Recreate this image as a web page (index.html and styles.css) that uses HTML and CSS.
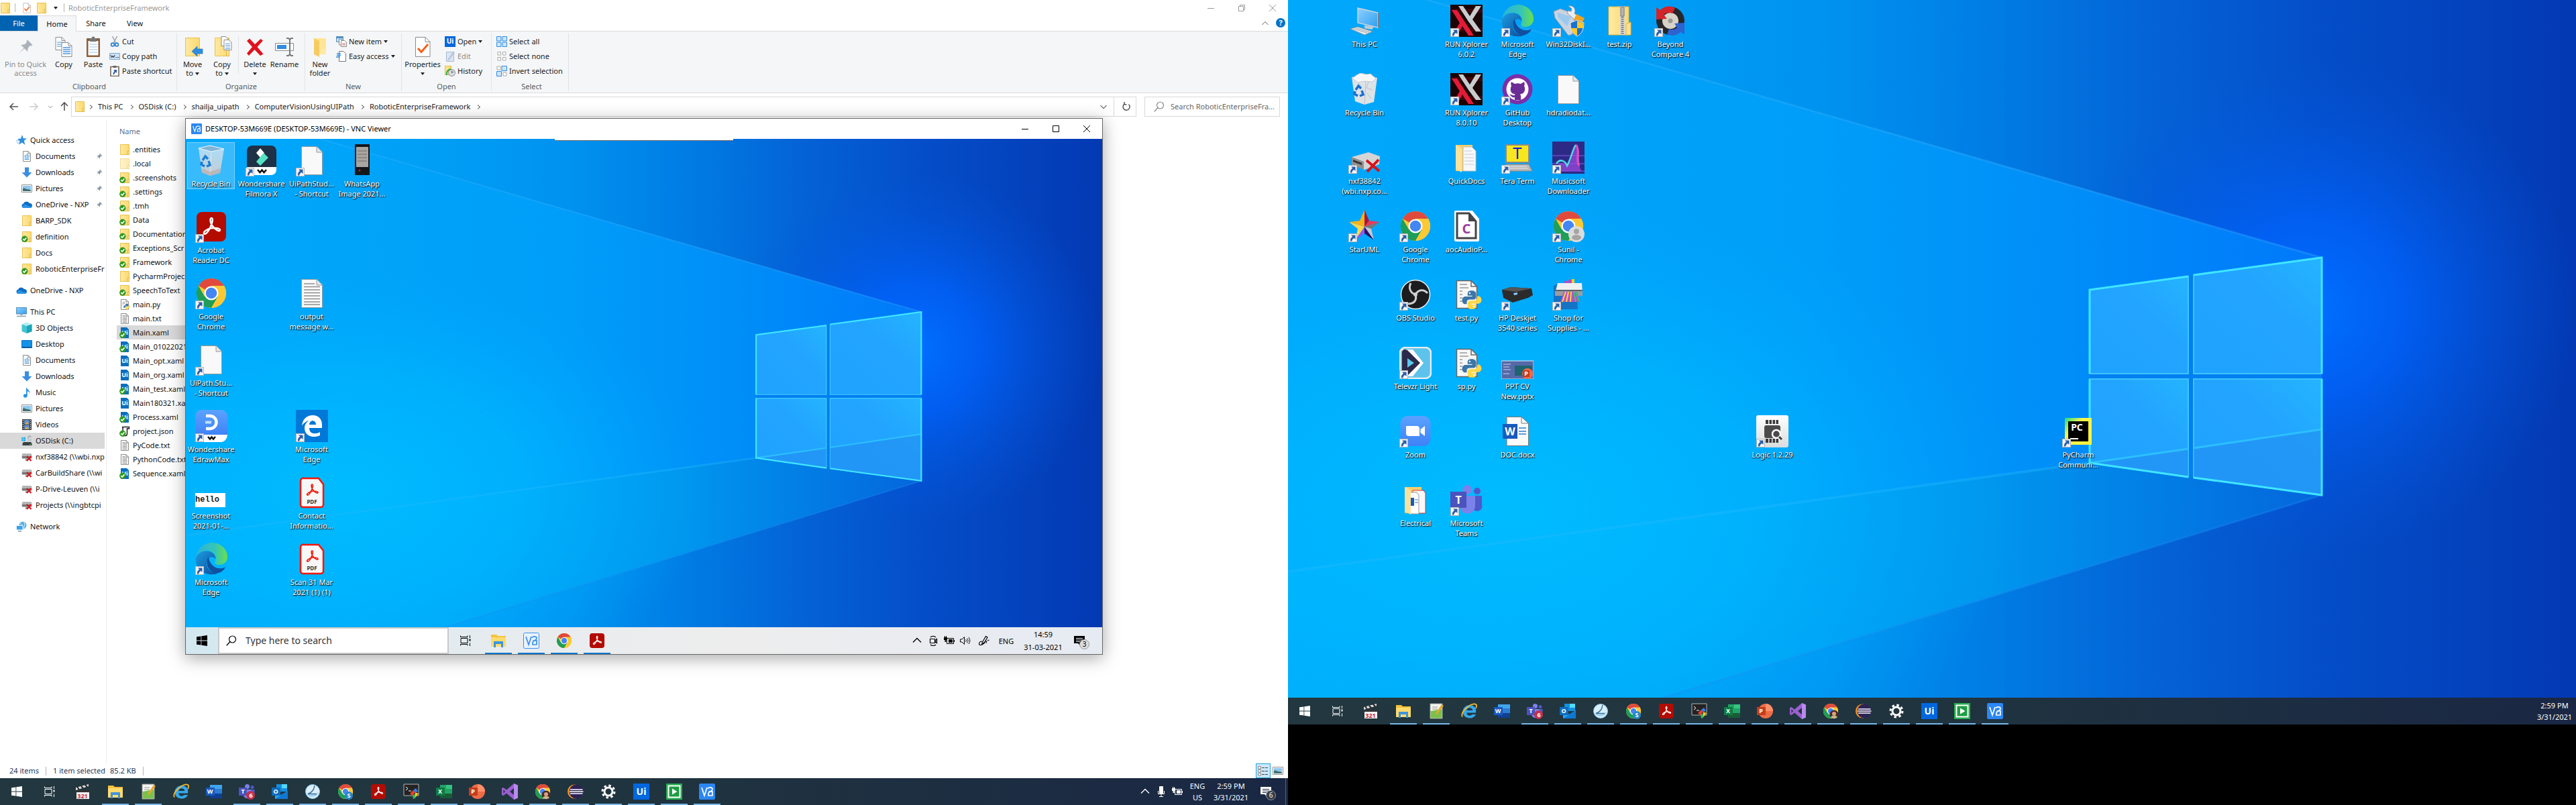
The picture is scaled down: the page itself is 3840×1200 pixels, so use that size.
FILE: index.html
```html
<!DOCTYPE html>
<html lang="en">
<head>
<meta charset="utf-8">
<title>RoboticEnterpriseFramework</title>
<link rel="stylesheet" href="styles.css">
</head>
<body>
<svg class="sprite" width="0" height="0" aria-hidden="true">
<defs>
<linearGradient id="wBase"><stop offset="0" stop-color="#00a6f9"/><stop offset=".25" stop-color="#00a0f6"/><stop offset=".42" stop-color="#0092ef"/><stop offset=".55" stop-color="#007ce4"/><stop offset=".67" stop-color="#0463d6"/><stop offset=".8" stop-color="#044ec9"/><stop offset="1" stop-color="#0339b3"/></linearGradient>
<linearGradient id="wBeam" gradientUnits="userSpaceOnUse" x1="0" y1="0" x2="1541" y2="0"><stop offset="0" stop-color="#00a8fb"/><stop offset=".3" stop-color="#00a3f8"/><stop offset=".5" stop-color="#009ef9"/><stop offset=".75" stop-color="#008ef8"/><stop offset="1" stop-color="#0078fa"/></linearGradient>
<linearGradient id="wLow" gradientUnits="userSpaceOnUse" x1="0" y1="0" x2="1541" y2="0"><stop offset="0" stop-color="#00b0fc"/><stop offset=".4" stop-color="#00a6f6"/><stop offset=".68" stop-color="#0096ee"/><stop offset="1" stop-color="#0466dc"/></linearGradient>
<radialGradient id="wGlow"><stop offset="0" stop-color="#0070ff"/><stop offset=".35" stop-color="#0064ff" stop-opacity=".75"/><stop offset="1" stop-color="#0456dc" stop-opacity="0"/></radialGradient>
<radialGradient id="wSoft"><stop offset="0" stop-color="#00bcff"/><stop offset=".5" stop-color="#00b6ff" stop-opacity=".7"/><stop offset="1" stop-color="#00aaff" stop-opacity="0"/></radialGradient>
<linearGradient id="wPane" x1="0" y1="1" x2="1" y2="0"><stop offset="0" stop-color="#1fa2ff"/><stop offset=".6" stop-color="#22a4ff"/><stop offset="1" stop-color="#25b4ff"/></linearGradient>
<linearGradient id="gEdge" x1="0" y1="0" x2="1" y2="1"><stop offset="0" stop-color="#1b9de2"/><stop offset="1" stop-color="#0c4a98"/></linearGradient>
<linearGradient id="gEdge2"><stop offset="0" stop-color="#2bb3d9"/><stop offset=".6" stop-color="#35c5b8"/><stop offset="1" stop-color="#6be04a"/></linearGradient>
<linearGradient id="gFold"><stop offset="0" stop-color="#ffe9a2"/><stop offset="1" stop-color="#fbd96f"/></linearGradient>
<linearGradient id="gScreen" x1="0" y1="0" x2="1" y2="1"><stop offset="0" stop-color="#8ed0ff"/><stop offset="1" stop-color="#2f9ff0"/></linearGradient>
<linearGradient id="gBin" x1="0" y1="0" x2="0" y2="1"><stop offset="0" stop-color="#d7e9f5" stop-opacity=".7"/><stop offset="1" stop-color="#c4cbd2"/></linearGradient>
<linearGradient id="gPc" x1="0" y1="0" x2="1" y2="1"><stop offset="0" stop-color="#1bd98a"/><stop offset=".35" stop-color="#fcf84a"/><stop offset="1" stop-color="#fcf03a"/></linearGradient>
<linearGradient id="gGrey" x1="0" y1="0" x2="0" y2="1"><stop offset="0" stop-color="#fff"/><stop offset="1" stop-color="#dcdcdc"/></linearGradient>
<linearGradient id="gBlue" x1="0" y1="0" x2="0" y2="1"><stop offset="0" stop-color="#5aa2ff"/><stop offset="1" stop-color="#3f82f7"/></linearGradient>
</defs>

<symbol id="wall" viewBox="0 0 1920 1080" preserveAspectRatio="none">
<rect width="1920" height="1080" fill="url(#wBase)"/>
<ellipse cx="1530" cy="460" rx="390" ry="370" fill="url(#wGlow)"/>
<path d="M0 0H210L1541 384V640L1195 690 0 852Z" fill="url(#wBeam)"/>
<path d="M0 852L1195 690 1541 738 430 1080H0Z" fill="url(#wLow)"/>
<ellipse cx="330" cy="760" rx="760" ry="470" fill="url(#wSoft)"/>
<path d="M180 -8L1541 384" stroke="#3fb4ff" stroke-opacity=".3" stroke-width="3"/>
<path d="M0 852L1195 690" stroke="#20b8ff" stroke-opacity=".4" stroke-width="4"/>
<path d="M430 1080L1541 738" stroke="#1c8cf0" stroke-opacity=".35" stroke-width="3"/>
<path d="M1195 432L1541 384V738L1195 690Z" fill="#027ff0"/>
<g fill="url(#wPane)" stroke="#3cc4ff" stroke-width="2"><path d="M1195 432L1342 412V557H1195Z"/><path d="M1350 410L1541 384V557H1350Z"/><path d="M1195 565H1342V711L1195 690Z"/><path d="M1350 565H1541V738L1350 712Z"/></g>
<path d="M1195 690L1342 669V711ZM1350 668L1541 640V738L1350 712Z" fill="#2489ee" fill-opacity=".5"/>
<path d="M1195 690L1342 669M1350 668L1541 640" stroke="#2cc0ff" stroke-width="3"/>
<path d="M1195 557V432L1342 412M1350 410L1541 384V557M1195 565V690L1342 711M1541 565V738L1350 712" fill="none" stroke="#3fe6ff" stroke-width="3"/>
</symbol>

<symbol id="sc" viewBox="0 0 48 48"><rect x=".5" y="35.500" width="12" height="12" fill="#f7f7f7" stroke="#b5b5b5"/><path d="M4 37.500H10.500V44L8.400 42C6.500 43 5.500 44.500 5.300 46.500H3C2.500 43.500 3.800 41 6.200 39.700Z" fill="#2c5ea8"/></symbol>
<symbol id="ok" viewBox="0 0 16 16"><circle cx="4.800" cy="11.200" r="4.700" fill="#2e9a1e"/><path d="M2.300 11.200L4.200 13 7.400 9.400" fill="none" stroke="#fff" stroke-width="1.600"/></symbol>
<symbol id="folder" viewBox="0 0 16 16"><path d="M1.500 .5H14.500V15.500H1.500Z" fill="url(#gFold)" stroke="#e9c14e"/><path d="M12 10.500L14.500 9.500V15.500H12Z" fill="#fbe093" stroke="#e2b843"/></symbol>
<symbol id="page" viewBox="0 0 16 16"><path d="M2.500 .5H10L13.500 4V15.500H2.500Z" fill="#fff" stroke="#8a8a8a"/><path d="M10 .5V4H13.500" fill="none" stroke="#8a8a8a"/></symbol>
<symbol id="txt" viewBox="0 0 16 16"><use href="#page"/><path d="M4.500 5.500H11.500M4.500 7.500H11.500M4.500 9.500H11.500M4.500 11.500H11.500M4.500 13.500H11.500M4.500 3.500H8.500" stroke="#8d8d8d"/></symbol>
<symbol id="json" viewBox="0 0 16 16"><path d="M4 1.500H14.500V4H12M4 1.500C6 2 5 4 5 6V12C5 14 4 14.500 3 14.500H9.500C11 14.500 11.500 13 11.500 11V3" fill="#fff" stroke="#222" stroke-width="1.500"/></symbol>
<symbol id="uifile" viewBox="0 0 16 16"><path d="M2 0H11L14 3V16H2Z" fill="#0c6ebd"/></symbol>
<symbol id="snake" viewBox="0 0 24 24"><path d="M12 1C8 1 7 2.500 7 4.500V7H12.500V8H4.500C2 8 .5 10 .5 12.500S2 17 4 17H6V14.500C6 12.500 7.500 11.500 9.500 11.500H14C16 11.500 17 10 17 8.500V4.500C17 2.500 15 1 12 1Z" fill="#3a76a8"/><path d="M12 23C16 23 17 21.500 17 19.500V17.500H11.500V16.500H19.500C22 16.500 23.500 14.500 23.500 12S22 7.500 20 7.500H18.300V9.500C18.300 11.500 16.500 13 14.500 13H10C8 13 7 14.500 7 16V19.500C7 21.500 9 23 12 23Z" fill="#ffd94a"/><circle cx="9.500" cy="4" r="1" fill="#fff"/><circle cx="14.500" cy="20" r="1" fill="#fff"/></symbol>
<symbol id="pyfile" viewBox="0 0 16 16"><use href="#page"/><path d="M4.500 4.500H9M4.500 6.500H8M4.500 8.500H6" stroke="#999"/><use href="#snake" x="6" y="6" width="10" height="10"/></symbol>
<symbol id="doc" viewBox="0 0 16 16"><use href="#page"/><path d="M4.500 6.500H7M4.500 8.500H7M4.500 10.500H11.500M4.500 12.500H11.500M8.500 4V9M10 6.500H12M10 8.500H12" stroke="#3b8fd0" stroke-width="1.200"/></symbol>
<symbol id="star" viewBox="0 0 16 16"><path d="M9 0L10.800 5.200 16 5.500 11.800 8.800 13.500 15 9 11.500 4 14.500 5.500 9.500 2 6.300 7 5.500Z" fill="#2f8fdf"/><path d="M0 9H4M1 12H4" stroke="#6ab4ec"/></symbol>
<symbol id="down" viewBox="0 0 16 16"><path d="M5 .5H11V8H15.500L8 15.500.5 8H5Z" fill="#3a8ee0"/></symbol>
<symbol id="pic" viewBox="0 0 16 16"><path d="M.5 2.500H15.500V13.500H.5Z" fill="#fff" stroke="#909090"/><path d="M2 4H14V12H2Z" fill="#8fc7ef"/><path d="M2 8C5 6.500 7 10 10 9L14 10.500V12H2Z" fill="#3e6f6f"/></symbol>
<symbol id="cloud" viewBox="0 0 16 16"><path d="M3.500 13A3.300 3.300 0 0 1 3 6.500 5 5 0 0 1 12 6 3.500 3.500 0 0 1 12.800 13Z" fill="#0f6cc4"/><path d="M1 11C3 7 7 7 9 9.500L15.500 11C15 12.500 14 13 12.800 13H3.500C2 13 1.200 12 1 11Z" fill="#2793e6"/></symbol>
<symbol id="pc" viewBox="0 0 16 16"><path d="M.5 1.500H15.500V11H.5Z" fill="url(#gScreen)" stroke="#5a8fb5"/><path d="M6 11.500H10V13H6Z" fill="#9ab"/><path d="M1 14.500H15" stroke="#8da6b5" stroke-width="1.600"/></symbol>
<symbol id="cube" viewBox="0 0 16 16"><path d="M8 0L15.500 2.500V13L8 16 .5 13V2.500Z" fill="#42c6d4"/><path d="M.5 2.500L8 5 15.500 2.500 8 0Z" fill="#b8eef2"/><path d="M8 5L15.500 2.500V13L8 16Z" fill="#1ea4b8"/></symbol>
<symbol id="desk" viewBox="0 0 16 16"><path d="M.5 2.500H15.500V13.500H.5Z" fill="#1593ea" stroke="#0d6fbd"/><path d="M1 12H15V13H1Z" fill="#0a4f90"/></symbol>
<symbol id="note" viewBox="0 0 16 16"><path d="M7 0C8 3.500 13 4.500 12.500 10 12 7.500 10.500 6.500 8.800 6.300V13A3 2.600 0 1 1 7 10.700Z" fill="#2492e6"/></symbol>
<symbol id="film" viewBox="0 0 16 16"><path d="M1 0H15V16H1Z" fill="#333"/><path d="M4 1H12V7.500H4ZM4 8.500H12V15H4Z" fill="#5f8fd0"/><path d="M5 7.500L8 3 11 7.500M5 15L8 10.500 11 15" fill="#d9a24a"/><path d="M2.500 1V16M13.500 1V16" stroke="#fff" stroke-dasharray="1.500 1.500"/></symbol>
<symbol id="disk" viewBox="0 0 16 16"><path d="M0 3H2.500V5.500H0ZM3 2.700H6V5.500H3ZM0 6H2.500V8.500H0ZM3 6H6V8.800H3Z" fill="#24b0ef"/><path d="M3 10H14L15.500 12V15H1.500V12Z" fill="#3a3f44"/><path d="M12 13.500H14" stroke="#39e03c"/><path d="M8.500 4.500H15V9.500H8.500Z" fill="#c5ccd2"/><path d="M10 4.500V3A2 2 0 0 1 14 3" fill="none" stroke="#9aa5ad" stroke-width="1.300"/></symbol>
<symbol id="ndrive" viewBox="0 0 16 16"><path d="M1.500 3H14.500L15.500 6V10H.5V6Z" fill="#b5b5b5"/><path d="M1 7H15V10.500H1Z" fill="#777"/><path d="M6 10.500H9V14H6Z" fill="#9a9a9a"/><path d="M8 7L14.500 14M14.500 7L8 14" stroke="#d8131b" stroke-width="2.200"/></symbol>
<symbol id="net" viewBox="0 0 16 16"><circle cx="10" cy="6" r="5.500" fill="#5fb0de"/><path d="M6 3L10 7 8 10M12 1L13 6 11 11" stroke="#d7eef8" fill="none"/><path d="M.5 6.500H10V13H.5Z" fill="#3aa2ea" stroke="#e8f4fb"/><path d="M3 15H8" stroke="#7a95a8" stroke-width="1.500"/></symbol>
<symbol id="pin" viewBox="0 0 16 16"><path d="M10 1L15 6 13.500 7 12.500 6.700 10.500 9 10 12.500 7 9.500 1.500 14.500 6.500 9 3.500 6 7 5.500 9.300 3.500 9 2.200Z" fill="#8b97a3"/></symbol>

<symbol id="rcopy" viewBox="0 0 32 32"><path d="M4 1.500H13L18 6.500V20.500H4Z" fill="#fff" stroke="#8a8a8a"/><path d="M13 1.500V6.500H18" fill="none" stroke="#8a8a8a"/><path d="M6 9H16M6 12H16M6 15H16" stroke="#84b8ea" stroke-width="1.400"/><path d="M13 9.500H23L28 14.500V30.500H13Z" fill="#fff" stroke="#8a8a8a"/><path d="M23 9.500V14.500H28" fill="none" stroke="#8a8a8a"/><path d="M15 17H26M15 20H26M15 23H26M15 26H26" stroke="#4a94e0" stroke-width="1.400"/></symbol>
<symbol id="rpaste" viewBox="0 0 32 32"><rect x="6" y="3" width="20" height="28" rx="1" fill="#8a5f3c"/><path d="M8.500 7H23.500V28.500H8.500Z" fill="#fff"/><path d="M10 12H22M10 16H22M10 20H22M10 24H22" stroke="#9cc4e8"/><path d="M11 3H13.500A2.500 2.500 0 0 1 18.500 3H21V8H11Z" fill="#777"/></symbol>
<symbol id="rcut" viewBox="0 0 16 16"><path d="M4.500 0L9.500 10M11.500 0L6.500 10" stroke="#9aa4ad" stroke-width="1.500"/><circle cx="5" cy="12.500" r="2.400" fill="none" stroke="#2a7fcd" stroke-width="1.600"/><circle cx="11" cy="12.500" r="2.400" fill="none" stroke="#2a7fcd" stroke-width="1.600"/></symbol>
<symbol id="rpath" viewBox="0 0 16 16"><path d="M.5 3.500H15.500V12.500H.5Z" fill="#cde4f7" stroke="#7ba7d0"/><path d="M2 6L3.500 10 5 7 6.500 10 8 6M9.500 9.500H10.500M11.500 9.500H12.500M13.300 9.500H14.300" fill="none" stroke="#223"/></symbol>
<symbol id="rps" viewBox="0 0 16 16"><path d="M2 1.500H14V15.500H2Z" fill="#fff" stroke="#76675a" stroke-width="1.600"/><path d="M5.500 0H10.500V3H5.500Z" fill="#666"/><path d="M6 6H11V11L9.300 9.500C8 10.300 7.500 11.500 7.500 13H5.500C5.500 11 6 9.500 7.700 8Z" fill="#2c5ea8"/></symbol>
<symbol id="rfold" viewBox="0 0 32 32"><path d="M5.500 2.500H26.500V29.500H5.500Z" fill="url(#gFold)" stroke="#e9c14e"/><path d="M22.500 20.500L26.500 18.500V29.500H22.500Z" fill="#fbe093" stroke="#e2b843"/></symbol>
<symbol id="rmove" viewBox="0 0 32 32"><use href="#rfold"/><path d="M15 22.500L23 15V19H31V26H23V30Z" fill="#2f8de0" stroke="#1d6cb5" stroke-width=".6"/></symbol>
<symbol id="rcopyto" viewBox="0 0 32 32"><use href="#rfold"/><path d="M15 .5H21L25 4V14.500H15Z" fill="#fff" stroke="#8a8a8a"/><path d="M19 5.500H26L30 9V20.500H19Z" fill="#fff" stroke="#8a8a8a"/><path d="M21 11H28M21 13.500H28M21 16H28M21 18.500H28" stroke="#5a9fe4"/></symbol>
<symbol id="rdel" viewBox="0 0 32 32"><path d="M4 7L8 3.500 16 12 24.500 4 28 6.500 19.500 16 28.500 26.500 24 29 15.500 20 7 29 4 25.500 12 16Z" fill="#e0131d"/></symbol>
<symbol id="rren" viewBox="0 0 32 32"><path d="M2.500 10.500H29.500V21.500H2.500Z" fill="#fff" stroke="#8a8a8a"/><path d="M5 13H19V19H5Z" fill="#2f8de0"/><path d="M19 3H22L24 5 26 3H29M24 5V27M19 29H22L24 27 26 29H29" fill="none" stroke="#777" stroke-width="2"/></symbol>
<symbol id="rnewf" viewBox="0 0 32 32"><path d="M7 3H25V27H7Z" fill="#ffe597"/><path d="M7 3L15 7V31L7 27Z" fill="#f5cc62"/><path d="M17 20L25 18V27H17Z" fill="#fdeaa9"/></symbol>
<symbol id="rnewi" viewBox="0 0 16 16"><path d="M.5 .5H10.500V8.500H.5Z" fill="#bfe0f8" stroke="#5f8fb5"/><path d="M.5 .5H10.500V3H.5Z" fill="#4c8fc7"/><path d="M4.500 4.500H9V13H4.500Z" fill="#fff" stroke="#888"/><path d="M7.500 6.500H12.500L15.500 9V15.500H7.500Z" fill="#fff" stroke="#888"/><path d="M9 11H14M9 13H14" stroke="#c66"/></symbol>
<symbol id="reasy" viewBox="0 0 16 16"><path d="M4.500 .5H11L14.500 4V15.500H4.500Z" fill="#fff" stroke="#777"/><path d="M1 4H7M1 6.500H7M0 9H6" stroke="#2f8de0" stroke-width="1.300"/></symbol>
<symbol id="rprop" viewBox="0 0 32 32"><path d="M5.500 1.500H20L27 8.500V30.500H5.500Z" fill="#fff" stroke="#8a8a8a"/><path d="M20 1.500V8.500H27" fill="none" stroke="#8a8a8a"/><path d="M9 18L14 23.500 24 12" fill="none" stroke="#f2611c" stroke-width="3"/></symbol>
<symbol id="uisq" viewBox="0 0 24 24"><path d="M0 0H24V24H0Z" fill="#0067df"/></symbol>
<symbol id="redit" viewBox="0 0 16 16"><path d="M2.500 1.500H13.500V15.500H2.500Z" fill="#dbe6f5" stroke="#a7b9d3"/><path d="M15 2L7 13 4.500 15 5 12 12.500 1Z" fill="#b3c3dc"/></symbol>
<symbol id="rhist" viewBox="0 0 16 16"><path d="M.5 .5H9.500V13.500H.5Z" fill="url(#gFold)" stroke="#e2b843"/><circle cx="10.500" cy="10.500" r="5" fill="#d8dde0" stroke="#889"/><path d="M10.500 7.500V10.500L13 9" fill="none" stroke="#555"/><path d="M3 14A7 7 0 0 1 9 5" fill="none" stroke="#2fae3b" stroke-width="2"/></symbol>
<symbol id="rall" viewBox="0 0 16 16"><path d="M.5 .5H7V7H.5ZM9 .5H15.500V7H9ZM.5 9H7V15.500H.5ZM9 9H15.500V15.500H9Z" fill="#cbe6fb" stroke="#2f8de0"/></symbol>
<symbol id="rnone" viewBox="0 0 16 16"><path d="M2 1.500H6.500V6H2ZM9.500 1.500H14V6H9.500ZM2 9.500H6.500V14H2ZM9.500 9.500H14V14H9.500Z" fill="#fff" stroke="#aaa"/></symbol>
<symbol id="rinv" viewBox="0 0 16 16"><path d="M1 1H6V6H1ZM10 10H15V15H10Z" fill="#fff" stroke="#aaa"/><path d="M8 .5H15.500V7.500H8ZM.5 8.500H7.500V15.500H.5Z" fill="#cbe6fb" stroke="#2f8de0"/></symbol>

<symbol id="bin" viewBox="0 0 48 48"><path d="M5 6L22 2 43 7 37 43 22 47 10 42Z" fill="url(#gBin)"/><path d="M5 6L24 11 43 7 22 2Z" fill="#7fb4d6" stroke="#eef5fa" stroke-width="1.200"/><path d="M24 11L22 47" stroke="#f3f7fa" stroke-opacity=".6"/><path d="M11 36L22 41 37 36 37 43 22 47 10 42Z" fill="#b8a9a2" fill-opacity=".6"/><path d="M11 24L15 18 19 22M20 25L22 31 17 33M14 33L9 30 10 26" fill="none" stroke="#1b7fd6" stroke-width="3.500"/></symbol>
<symbol id="binfull" viewBox="0 0 48 48"><path d="M5 6L22 3 43 7 38 43 24 47 10 42Z" fill="#dde3e7"/><path d="M6 8L12 3 18 0 27 2 33 1 41 8 36 13 24 12 14 14Z" fill="#f6f7f8" stroke="#c3cacf"/><path d="M14 14L20 20M30 13L27 22 36 25M28 30L34 38M26 12L24 47" stroke="#b9c2c8" fill="none"/><path d="M11 25L15 19 19 23M20 26L22 32 17 34M14 34L9 31 10 27" fill="none" stroke="#1b6fd0" stroke-width="3.500"/></symbol>
<symbol id="filmora" viewBox="0 0 48 48"><path d="M2 38V10A8 8 0 0 1 10 2H38A8 8 0 0 1 46 10V38Z" fill="#1e3145"/><path d="M2 34H46V38A8 8 0 0 1 38 46H2Z" fill="#fff"/><path d="M22 6L28 13 22 20 16 13Z" fill="#fff"/><path d="M27 13L34 20 22 32 16 26Z" fill="#56e3c4"/><path d="M18 38L21.500 42 24.500 38.500 27.500 42 31 38" fill="none" stroke="#111" stroke-width="2.500"/></symbol>
<symbol id="blank" viewBox="0 0 48 48"><path d="M8.500 3.500H31L39.500 12V45.500H8.500Z" fill="#f9f9f9" stroke="#999"/><path d="M31 3.500V12H39.500" fill="#e6e6e6" stroke="#999"/></symbol>
<symbol id="lines" viewBox="0 0 48 48"><use href="#blank"/><path d="M12 10H28M12 14.500H36M12 19H36M12 23.500H36M12 28H36M12 32.500H36M12 37H36M12 41H36" stroke="#8f8f8f" stroke-width="1.300"/></symbol>
<symbol id="phone" viewBox="0 0 48 48"><path d="M13 0H35V46H13Z" fill="#15161a"/><path d="M15 4H33V34H15Z" fill="#a9a5a0"/><path d="M17 10H31M17 15H31M17 20H31M17 25H31" stroke="#8c8884" stroke-width="2"/><circle cx="20" cy="39" r="1.500" fill="#933"/></symbol>
<symbol id="tri" viewBox="0 0 24 24"><path d="M3.500 20.500C1 18.500 8 14.500 12 14 17 13.300 23 14.500 21.500 16.800 20 19 11.500 12.500 10.500 5.500 10 1 13.500 1.500 13 5 12.300 10.500 6.500 22.500 3.500 20.500Z" fill="none" stroke="currentColor" stroke-width="1.900"/></symbol>
<symbol id="acro" viewBox="0 0 48 48"><rect x="2" y="2" width="44" height="44" rx="8" fill="#b30b00"/><use href="#tri" x="9" y="8" width="31" height="31" color="#fff"/></symbol>
<symbol id="chrome" viewBox="0 0 48 48"><circle cx="24" cy="24" r="22" fill="#fcc934"/><path d="M24 24L4.900 13A22 22 0 0 1 43.100 13Z" fill="#e04a3c"/><path d="M4.900 13A22 22 0 0 0 24 46L34 29 24 24 14 29Z" fill="#1e9e58"/><path d="M24 13H43.100A22 22 0 0 1 24 46L33.500 29.500Z" fill="#fcc934"/><circle cx="24" cy="24" r="10.500" fill="#fff"/><circle cx="24" cy="24" r="8.300" fill="#4486f4"/></symbol>
<symbol id="edraw" viewBox="0 0 48 48"><path d="M0 38V9A9 9 0 0 1 9 0H39A9 9 0 0 1 48 9V38Z" fill="url(#gBlue)"/><path d="M0 37H48A10 11 0 0 1 38 48H0Z" fill="#fff"/><path d="M16 9H22A9.500 9.500 0 0 1 22 28H16" fill="none" stroke="#fff" stroke-width="4.500"/><path d="M15 18.500H24" stroke="#bfe0ff" stroke-width="4"/><path d="M19 40L22 43.500 24.500 40.500 27 43.500 30 40" fill="none" stroke="#111" stroke-width="2.500"/></symbol>
<symbol id="ledge" viewBox="0 0 48 48"><path d="M0 0H48V48H0Z" fill="#0078d7"/><path d="M9 24C10 13 17 8 25 8 34 8 39 14 39 22V27H20C20 36 29 37 36 33V38C26 43 13 39 13 27 13 22 16 18 20 16 15 17 11 20 9 24ZM20 22H30C30 15 21 14 20 22Z" fill="#fff" fill-rule="evenodd"/></symbol>
<symbol id="hello" viewBox="0 0 48 48"><path d="M0 25H45V46H0Z" fill="#fff"/></symbol>
<symbol id="pdf" viewBox="0 0 48 48"><path d="M12 3H34L41 12V43A4 4 0 0 1 38 46H11A4 4 0 0 1 7 43V7A4 4 0 0 1 12 3Z" fill="#f7f7f7" stroke="#f4170b" stroke-width="2.500"/><use href="#tri" x="14" y="10" width="21" height="21" color="#f4170b"/></symbol>
<symbol id="edge" viewBox="0 0 48 48"><path d="M1 22C3 9 13 0 25 0 38 0 48 10 48 21 48 29 42 33 36 33 31 33 27 31 30 27 33 20 27 12 17 12 9 12 3 16 1 22Z" fill="url(#gEdge2)"/><path d="M1 22C5 14 14 11 21 13 28 15 31 21 30 24 26 18 17 22 17 31 17 40 26 47 33 46 18 51-1 42 1 22Z" fill="url(#gEdge)"/><path d="M20 21C15 27 17 41 29 46 38 46 44 40 45 36 36 42 21 36 20 21Z" fill="#11509f"/></symbol>
<symbol id="bigpc" viewBox="0 0 48 48"><path d="M14 5L44 12V34L14 27Z" fill="url(#gScreen)" stroke="#c9d3da" stroke-width="1.500"/><path d="M44 12L46 13V34L44 34Z" fill="#6f7f8a"/><path d="M24 31L38 33 35 37 24 35Z" fill="#c4ccd2"/><path d="M3 36L14 33 36 40 24 45Z" fill="#e8ecef" stroke="#8a959c"/><path d="M8 36L28 42M12 35L32 41" stroke="#9aa5ac"/></symbol>
<symbol id="runx" viewBox="0 0 48 48"><path d="M0 0H48V48H0Z" fill="#1c0305"/><path d="M0 6H48V12H0ZM0 34H48V40H0Z" fill="#3a080c"/><path d="M12 2H19L29 17 38 2H46L33 22 46 40H38L27 25Z" fill="#c9cccf"/><path d="M2 8H10L35 46H27L18 32 11 44H4L14 27Z" fill="#e31b38"/></symbol>
<symbol id="w32" viewBox="0 0 48 48"><path d="M2 10L12 6 34 14 30 44 24 46 4 20Z" fill="#c9d3e0" stroke="#8796ab"/><path d="M8 12L28 18 22 32 8 18Z" fill="#9cc9ee"/><path d="M24 2C32 0 36 8 33 13L42 20 37 26 26 16C22 14 22 10 24 9L28 10 29 6Z" fill="#e9edf2" stroke="#8c98a8"/><path d="M36 14L48 20 44 28 32 22Z" fill="#f0a321"/><path d="M27 27L37 23 47 27C47 38 43 44 37 47 31 44 27 38 27 27Z" fill="#1a73c9" stroke="#dfe6ee"/><path d="M37 24L46 27.500V35H37ZM28 35H37V46C32 44 29 40 28 35Z" fill="#ffc62e"/></symbol>
<symbol id="zip" viewBox="0 0 48 48"><path d="M8 3H38V45H8Z" fill="url(#gFold)" stroke="#e2b843"/><path d="M34 29L41 26V45H34Z" fill="#fbe093" stroke="#e2b843"/><path d="M25 2H32V45H25Z" fill="#d9d9d9"/><path d="M28.500 18V45" stroke="#777" stroke-width="4" stroke-dasharray="1.500 1.500"/><path d="M26 3H31V17H26Z" fill="#b5b5b5" stroke="#777"/></symbol>
<symbol id="beyond" viewBox="0 0 48 48"><circle cx="24" cy="24" r="21" fill="#26272b"/><circle cx="24" cy="24" r="12" fill="#d8d3c7"/><circle cx="24" cy="24" r="3.500" fill="#9a9a95"/><path d="M3 22V4L9 8C15 2 24 1 31 5L27 13C22 11 17 12 14 15L19 21Z" fill="#d3242a"/><path d="M45 27V44L39 41C34 46 26 47 19 44L22 36C27 38 31 37 34 34L30 28Z" fill="#2e62cf"/></symbol>
<symbol id="github" viewBox="0 0 48 48"><circle cx="24" cy="24" r="22.500" fill="#7b2fa8"/><circle cx="24" cy="24" r="16.500" fill="#fff"/><path d="M15 13L20 16C23 15 26 15 29 16L34 13C35 16 35 18 34 19 37 25 34 31 28 31.500 30 34 29 37 29 40H20V36C15 37 15 33 12 32 15 31 17 34 20 33 20 32 20 32 21 31.500 14 31 12 25 15 19 14 17 14 15 15 13Z" fill="#6b2c96"/></symbol>
<symbol id="bigdrive" viewBox="0 0 48 48"><path d="M5 23L30 16 47 22 46 34 24 42 5 34Z" fill="#d5d5d5"/><path d="M5 23L23 30V42L5 34Z" fill="#8f8f8f"/><path d="M7 27L20 32V35L7 30Z" fill="#333"/><path d="M27 28L46 44M45 27L28 45" stroke="#d8131b" stroke-width="4"/></symbol>
<symbol id="qdocs" viewBox="0 0 48 48"><path d="M8 5H33V44H8Z" fill="#f6cf6b"/><path d="M19 8H32L38 14V44H19Z" fill="#f8f8f8" stroke="#bbb"/><path d="M21 14H32M21 19H35M21 24H35M21 29H35M21 34H35" stroke="#c5cdd5"/><path d="M8 5L17 10V46L8 41Z" fill="#fbe29c"/></symbol>
<symbol id="tera" viewBox="0 0 48 48"><path d="M7 5H41V31H7Z" fill="#f8e71c" stroke="#8a8a8a" stroke-width="2"/><path d="M7 34H41L46 44H4Z" fill="#b9b9b9" stroke="#888"/><path d="M10 37H38M9 40H40" stroke="#e9e9e9"/></symbol>
<symbol id="musics" viewBox="0 0 48 48"><path d="M0 0H48V48H0Z" fill="#2d2a86"/><path d="M0 21H48M0 33H48M0 44H48" stroke="#8a5be8"/><path d="M8 36C14 24 24 44 28 26 31 14 34 2 37 4 42 10 38 40 44 44L10 44Z" fill="#a34be0" fill-opacity=".7"/><path d="M6 33C12 24 20 30 22 36 28 26 30 12 35 5" fill="none" stroke="#4fd8e8" stroke-width="2.500"/><path d="M36 6C42 16 34 26 40 36" stroke="#e84bb8" stroke-width="3" fill="none"/></symbol>
<symbol id="suml" viewBox="0 0 48 48"><path d="M24 0V25L1 18 17 16Z" fill="#f5b21a"/><path d="M24 0L31 16 24 25Z" fill="#a8163f"/><path d="M31 16L47 18 24 25Z" fill="#e83a58"/><path d="M47 18L34 28 24 25Z" fill="#777"/><path d="M34 28L38 45 24 25Z" fill="#c9c9cc"/><path d="M38 45L24 35V25Z" fill="#2b1166"/><path d="M24 35L10 45 24 25Z" fill="#8b5cf0"/><path d="M10 45L14 28 24 25ZM1 18L14 28 24 25Z" fill="#ffd64a"/></symbol>
<symbol id="aoc" viewBox="0 0 48 48"><path d="M8 3H32L41 14V45H8Z" fill="#fff" stroke="#fff" stroke-width="4" stroke-linejoin="round"/><path d="M10 5H28L38 17V42H10Z" fill="#fff" stroke="#444" stroke-width="3"/><path d="M27 4L39 17H27Z" fill="#444"/></symbol>
<symbol id="sunil" viewBox="0 0 48 48"><use href="#chrome"/><circle cx="36" cy="36" r="12" fill="#dcdcdc"/><circle cx="36" cy="32" r="4" fill="#a5a5a5"/><ellipse cx="36" cy="41" rx="7" ry="4" fill="#a5a5a5"/></symbol>
<symbol id="obs" viewBox="0 0 48 48"><circle cx="24" cy="24" r="21.500" fill="#1c1b1d" stroke="#f0f0f0" stroke-width="1.500"/><path d="M24 24C17 22 13 15 17 7M24 24C28 17 36 15 42 22M24 24C26 31 24 38 12 38" fill="none" stroke="#cfcfd2" stroke-width="3"/><circle cx="24" cy="24" r="3" fill="#cfcfd2"/></symbol>
<symbol id="bigpy" viewBox="0 0 48 48"><path d="M9.500 3.500H31L39.500 12V44.500H9.500Z" fill="#f7f7f7" stroke="#666" stroke-width="1.500"/><path d="M31 3.500V12H39.500" fill="none" stroke="#666" stroke-width="1.500"/><path d="M14 9H25M14 14H27M14 19H18M14 24H18M14 29H18M14 34H18" stroke="#999" stroke-width="1.300"/><use href="#snake" x="17" y="17" width="30" height="30"/></symbol>
<symbol id="hp" viewBox="0 0 48 48"><path d="M1 17L14 13 45 15 47 25 40 29 17 36 3 29Z" fill="#2b2b2c"/><path d="M1 17L14 13 45 15 22 20Z" fill="#555"/><path d="M18 22L24 21V24L19 25Z" fill="#8cf"/></symbol>
<symbol id="printer" viewBox="0 0 48 48"><path d="M2 11L8 8H36L38 46H6L2 42Z" fill="#1673c4"/><path d="M18 4H22V10H18ZM24 2H28V10H24Z" fill="#d83bb8"/><path d="M29 1H33V10H29Z" fill="#e8d02a"/><path d="M8 7H44L45 22H4Z" fill="#eef0f2"/><path d="M4 17H45V26H4Z" fill="#9a9da1"/><path d="M4 17H45V19H4Z" fill="#5d6166"/><path d="M17 20H37L41 35H12Z" fill="#b64fd0"/><path d="M20 20L15 35M24 20L21 35M28 20L27 35" stroke="#ffd83a" stroke-width="2"/><path d="M32 20L35 35M35 20L40 34" stroke="#35c96a" stroke-width="2"/></symbol>
<symbol id="telev" viewBox="0 0 48 48"><rect x="1" y="1" width="46" height="46" rx="8" fill="#5ec3ea" stroke="#e9edf0" stroke-width="2.500"/><path d="M4 4H20L36 24 20 44H4Z" fill="#fff"/><path d="M4 8C4 4 8 3 12 5L31 24 12 43H4Z" fill="#2b2a48"/><path d="M12 17L22 24 12 31Z" fill="#5cc8ee"/></symbol>
<symbol id="pptth" viewBox="0 0 48 48"><path d="M0 21H48V48H0Z" fill="#5569a8" stroke="#e6e9f2"/><path d="M3 26H14M3 30H12M3 34H14M3 40H12" stroke="#cdd6f0"/><path d="M20 28H46V43H20Z" fill="#1d6470"/><circle cx="39" cy="40" r="8" fill="#ee6b47"/><path d="M32 35H42V45H32Z" fill="#c43e1c"/></symbol>
<symbol id="zoomi" viewBox="0 0 48 48"><rect x="1.500" y="1" width="45" height="45" rx="11" fill="url(#gBlue)"/><path d="M10 16H26A4 4 0 0 1 30 20V31H14A4 4 0 0 1 10 27Z" fill="#fff"/><path d="M31.500 21L38 16V31L31.500 26Z" fill="#fff"/></symbol>
<symbol id="docx" viewBox="0 0 48 48"><path d="M8 2.500H30L40.500 12V45.500H8Z" fill="#fbfbfb" stroke="#777"/><path d="M30 2.500V12H40.500" fill="none" stroke="#777"/><path d="M26 19H37M26 24H37M26 28H37" stroke="#2b7cd3" stroke-width="1.500"/><path d="M2 13H24V35H2Z" fill="#185abd"/></symbol>
<symbol id="elec" viewBox="0 0 48 48"><path d="M8 5H33V44H8Z" fill="#f6cf6b"/><path d="M20 10H36L39 14V44H20Z" fill="#f8f8f8" stroke="#d9302c"/><path d="M16 13H26L29 17V45H16Z" fill="#fff" stroke="#999"/><path d="M16 21H22V33H16Z" fill="#185abd"/><path d="M23 24H28M23 28H28" stroke="#2b7cd3"/><path d="M8 5L17 10V46L8 41Z" fill="#fbe29c"/></symbol>
<symbol id="teams" viewBox="0 0 48 48"><circle cx="25" cy="9" r="7" fill="#7b83eb"/><circle cx="40" cy="11" r="5" fill="#5059c9"/><path d="M33 18H47V31A7 7 0 0 1 33 36Z" fill="#5059c9"/><path d="M14 18H37V33A11.500 11.500 0 0 1 14 33Z" fill="#7b83eb"/><path d="M0 12H24V36H0Z" fill="#4b53bc"/></symbol>
<symbol id="logic" viewBox="0 0 48 48"><rect x="0" y="0" width="48" height="48" rx="3" fill="url(#gGrey)"/><path d="M14 7H18V13H14ZM19.500 7H23V13H19.500ZM24.500 7H28V13H24.500ZM29.500 7H33V13H29.500ZM14 35H18V41H14ZM19.500 35H23V41H19.500ZM24.500 35H28V41H24.500ZM29.500 35H33V41H29.500Z" fill="#3b3b3b"/><rect x="12" y="15" width="24" height="19" rx="3" fill="#4a4a4a"/><circle cx="30" cy="28" r="6" fill="#4a4a4a" stroke="#fff" stroke-width="2.500"/><path d="M34 32L38 36" stroke="#3b3b3b" stroke-width="3"/></symbol>
<symbol id="pych" viewBox="0 0 48 48"><path d="M4 4H44V44H4Z" fill="url(#gPc)"/><path d="M9 9H39V39H9Z" fill="#000"/><path d="M12 34H24V36H12Z" fill="#fff"/></symbol>

<symbol id="win" viewBox="0 0 16 16"><path d="M0 2.300L6.500 1.400V7.600H0ZM7.300 1.300L16 0V7.600H7.300ZM0 8.400H6.500V14.600L0 13.700ZM7.300 8.400H16V16L7.300 14.700Z" fill="currentColor"/></symbol>
<symbol id="tview" viewBox="0 0 16 16"><path d="M.5 .5V2.500H11V.5M.5 15.500V13.500H11V15.500M1 4.500H11V11.500H1ZM14.500 0V4M14.500 11.500V16" fill="none" stroke="currentColor"/><path d="M13.500 5.500H15.500V8.500H13.500Z" fill="currentColor"/></symbol>
<symbol id="clap" viewBox="0 0 24 24"><path d="M2 6L21 1V4L2 10Z" fill="#ddd"/><path d="M4 5L7 9M10 4L13 7M16 2L19 5" stroke="#222" stroke-width="2"/><path d="M3 10H22V23H3Z" fill="#f3f3f3"/><path d="M3 10H22V13H3Z" fill="#333"/></symbol>
<symbol id="expl" viewBox="0 0 24 24"><path d="M1 3H9L11 5H23V21H1Z" fill="#f7c23c"/><path d="M1 7H23V21H1Z" fill="#ffdb6e"/><path d="M5 13H19V22H16V17H8V22H5Z" fill="#3e94dc"/></symbol>
<symbol id="npp" viewBox="0 0 24 24"><path d="M3 1H21V23H3Z" fill="#f3f5ee" stroke="#999"/><path d="M3.500 12L20.500 9V22.500H3.500Z" fill="#7cc04b"/><path d="M6 6H14M6 9H14" stroke="#9a9a9a"/><path d="M20 2L23 4 14 16 11 17 12 14Z" fill="#e6a92e"/></symbol>
<symbol id="ie" viewBox="0 0 24 24"><path d="M22 14.500C23.500 7 19 3 13 3 7 3 2.500 7.500 2.500 13S7 22.500 13 22.500C17 22.500 20.500 20.500 22 17H16.500C14 20 8.500 19 8.300 14.500ZM8.300 11C8.500 6 17 6 17.300 11Z" fill="#35a7ea" fill-rule="evenodd"/><path d="M2 20.500C-2 14 14 0 21 1.500 24 2 23 6 22 8" fill="none" stroke="#f5b82e" stroke-width="1.800"/></symbol>
<symbol id="word" viewBox="0 0 24 24"><path d="M6 2H24V22H6Z" fill="#2b7cd3"/><path d="M6 2H24V8H6Z" fill="#41a5ee"/><path d="M6 15H24V22H6Z" fill="#103f91"/><path d="M0 6H13V18H0Z" fill="#185abd"/></symbol>
<symbol id="excel" viewBox="0 0 24 24"><path d="M6 2H24V22H6Z" fill="#21a366"/><path d="M15 2H24V8H15Z" fill="#33c481"/><path d="M6 15H24V22H6Z" fill="#185c37"/><path d="M0 6H13V18H0Z" fill="#107c41"/></symbol>
<symbol id="pptt" viewBox="0 0 24 24"><circle cx="13" cy="12" r="11" fill="#ed6c47"/><path d="M13 1A11 11 0 0 1 24 12H13Z" fill="#ff8f6b"/><path d="M0 6H13V18H0Z" fill="#c43e1c"/></symbol>
<symbol id="outl" viewBox="0 0 24 24"><path d="M7 1H23V12H7Z" fill="#1490df"/><path d="M15 1H23V7H15Z" fill="#50d9ff"/><path d="M5 11L14 17 24 11V23H5Z" fill="#28a8ea"/><path d="M5 23L24 11V23Z" fill="#0f78d4"/><path d="M0 6H13V18H0Z" fill="#0f6cbd"/></symbol>
<symbol id="teams6" viewBox="0 0 24 24"><use href="#teams"/><circle cx="17.500" cy="17.500" r="6.500" fill="#c4314b"/></symbol>
<symbol id="safar" viewBox="0 0 24 24"><circle cx="12" cy="12" r="10.500" fill="#d9effb" stroke="#8fc4e4"/><path d="M3 15C9 18 16 17 21 13A10 10 0 0 1 3 15Z" fill="#9fd0ef"/><path d="M15 3C14 9 12 13 5 15.500M5 15.500H18" fill="none" stroke="#3a6f95" stroke-width="1.500"/></symbol>
<symbol id="chrs" viewBox="0 0 24 24"><use href="#chrome"/><circle cx="17" cy="18" r="6" fill="#2588c8"/></symbol>
<symbol id="chrp" viewBox="0 0 24 24"><use href="#chrome"/><circle cx="17" cy="17" r="6.500" fill="#4a2a22"/><circle cx="17" cy="16" r="3" fill="#d9a184"/><path d="M12 21C14 18 20 18 22 21 19 24 15 24 12 21Z" fill="#c9b58a"/></symbol>
<symbol id="term" viewBox="0 0 24 24"><path d="M1 1H23V18H1Z" fill="#232323" stroke="#b5b5b5"/><path d="M4 5L7 7.500 4 10M8 11H12" stroke="#fff" fill="none"/><path d="M10 15L15 10 18 13 14 18Z" fill="#e8412e"/><path d="M15 10L19 7 22 12 18 13Z" fill="#3a7de8"/><path d="M18 13L23 15 18 21Z" fill="#f3c623"/><path d="M14 18L18 15 18 22 15 23Z" fill="#46b648"/></symbol>
<symbol id="vs" viewBox="0 0 24 24"><path d="M18 0L24 2.500V21.500L18 24 7 14.500 2.500 18 0 17V7L2.500 6 7 9.500ZM18 7L12 12 18 17ZM2.500 9V15L5 12Z" fill="#9b5fd0" fill-rule="evenodd"/><path d="M18 0L24 2.500V21.500L18 24Z" fill="#b98af0"/></symbol>
<symbol id="ecl" viewBox="0 0 24 24"><circle cx="10.500" cy="12" r="10.500" fill="#f7941e"/><circle cx="13" cy="12" r="10.500" fill="#2c2255"/><path d="M4 9H22.500M3 12H23.500M4 15H22.500" stroke="#fff" stroke-width="1.500"/></symbol>
<symbol id="gear" viewBox="0 0 24 24"><circle cx="12" cy="12" r="6" fill="none" stroke="#fff" stroke-width="3"/><circle cx="12" cy="12" r="9" fill="none" stroke="#fff" stroke-width="3" stroke-dasharray="3.500 3.570"/></symbol>
<symbol id="camt" viewBox="0 0 24 24"><path d="M0 0H24V24H0Z" fill="#27ae4e"/><path d="M3.500 3.500H20.500V20.500H3.500Z" fill="#1f9d45" stroke="#fff" stroke-width="2"/><path d="M9 7.500L16.500 12 9 16.500Z" fill="#fff"/></symbol>
<symbol id="vglyph" viewBox="0 0 24 24"><path d="M4 6L8 18 12 6M13 7.500C15 5 20 5.500 20 8.500 20 12 14 11.500 14 15V18H20.500M14.500 12H20V18" fill="none" stroke="currentColor" stroke-width="1.700"/></symbol>
<symbol id="vnc" viewBox="0 0 24 24"><rect width="24" height="24" rx="2" fill="#2b87f3"/><use href="#vglyph" color="#fff"/></symbol>
<symbol id="vnco" viewBox="0 0 24 24"><rect x=".5" y=".5" width="23" height="23" rx="2" fill="#eaf3fd" stroke="#3b8ff0"/><use href="#vglyph" color="#3b8ff0"/></symbol>
<symbol id="up" viewBox="0 0 16 16"><path d="M2 10.500L8 4.500 14 10.500" fill="none" stroke="currentColor" stroke-width="1.400"/></symbol>
<symbol id="mic" viewBox="0 0 16 16"><rect x="5" y="0" width="6" height="11" rx="1" fill="currentColor"/><path d="M3.500 7V11.500H12.500V7M8 12V15.500M5 15.500H11" fill="none" stroke="currentColor"/></symbol>
<symbol id="batt" viewBox="0 0 16 16"><path d="M4.500 4.500H14.500V12.500H4.500Z" fill="none" stroke="currentColor"/><path d="M7 6H13V11H7Z" fill="currentColor"/><path d="M15 7H16V10H15ZM0 3H5V7H3.500V10H1.500V7H0ZM1 1H2V3H1ZM3 1H4V3H3Z" fill="currentColor"/></symbol>
<symbol id="meet" viewBox="0 0 16 16"><path d="M3.500 5.500H10.500V11.500H3.500ZM11 8L13.500 5.500V11.500L11 9M4 3C6 .8 10 .8 12 3M4 14C6 16 10 16 12 14" fill="none" stroke="currentColor" stroke-width="1.200"/></symbol>
<symbol id="spk" viewBox="0 0 16 16"><path d="M.5 6H3L6.500 2.500V13.500L3 10H.5ZM8.500 6C9.500 7 9.500 9 8.500 10M10.500 4.500C12.500 6.500 12.500 9.500 10.500 11.500M12.800 3C15.500 6 15.500 10 12.800 13" fill="none" stroke="currentColor"/></symbol>
<symbol id="pen" viewBox="0 0 16 16"><path d="M5 11L10.500 1.500 13 3 8 12 5 14ZM5 9C0 9-1 15 3 14.500 6 14 8 10 10 9 12 8 12 11 10.500 11.500M13 8L15.500 7" fill="none" stroke="currentColor" stroke-width="1.200"/></symbol>
<symbol id="msg" viewBox="0 0 16 16"><path d="M0 1H16V12H9V15L6 12H0ZM3 4V5H13V4ZM3 6.500V7.500H13V6.500ZM3 9V10H9V9Z" fill="currentColor" fill-rule="evenodd"/></symbol>
<symbol id="mag" viewBox="0 0 16 16"><circle cx="9.500" cy="6" r="5" fill="none" stroke="currentColor" stroke-width="1.200"/><path d="M6 9.500L.8 15.200" stroke="currentColor" stroke-width="1.300"/></symbol>
<symbol id="wmin" viewBox="0 0 16 16"><path d="M3 8.500H13" stroke="currentColor"/></symbol>
<symbol id="wmax" viewBox="0 0 16 16"><path d="M3.500 3.500H12.500V12.500H3.500Z" fill="none" stroke="currentColor"/></symbol>
<symbol id="wres" viewBox="0 0 16 16"><path d="M3.500 5.500H10.500V12.500H3.500ZM5.500 5.500V3.500H12.500V10.500H10.500" fill="none" stroke="currentColor"/></symbol>
<symbol id="wx" viewBox="0 0 16 16"><path d="M3 3L13 13M13 3L3 13" stroke="currentColor"/></symbol>
<symbol id="arr" viewBox="0 0 16 16"><path d="M14 8H2.500M7 3L2 8 7 13" fill="none" stroke="currentColor" stroke-width="1.600"/></symbol>
<symbol id="rel" viewBox="0 0 16 16"><path d="M11.500 4.500A5 5 0 1 1 5 4.200M5 1V4.700H8.500" fill="none" stroke="currentColor" stroke-width="1.500"/></symbol>
<symbol id="vlist" viewBox="0 0 16 16"><path d="M.5 1.500H4.500V5H.5ZM.5 6.500H4.500V10H.5ZM.5 11.500H4.500V15H.5Z" fill="#fff" stroke="#888"/><path d="M6 3.500H10M11 3.500H15M6 8.500H10M11 8.500H15M6 13.500H10M11 13.500H15" stroke="#444"/></symbol>
</svg>

<div class="screens">
<main class="left">
  <section class="explorer">
    <header class="titlebar">
      <svg class="i16"><use href="#folder"/></svg><i class="bar"></i>
      <svg class="i16"><use href="#rprop"/></svg><svg class="i16"><use href="#folder"/></svg><span class="qdrop"></span><i class="bar"></i>
      <h1>RoboticEnterpriseFramework</h1>
      <div class="winbtns"><button aria-label="Minimize"><svg class="i16"><use href="#wmin"/></svg></button><button aria-label="Restore"><svg class="i16"><use href="#wres"/></svg></button><button aria-label="Close"><svg class="i16"><use href="#wx"/></svg></button></div>
    </header>
    <nav class="tabs">
      <button class="file">File</button><button class="home">Home</button><button>Share</button><button>View</button>
      <span class="grow"></span><button class="fold" aria-label="Collapse ribbon"><svg class="i12"><use href="#up"/></svg></button><button class="help" aria-label="Help">?</button>
    </nav>
    <div class="ribbon">
      <div class="group g1"><div class="tools">
        <button class="big wide off"><svg><use href="#pin"/></svg>Pin to Quick<br>access</button>
        <button class="big"><svg><use href="#rcopy"/></svg>Copy</button>
        <button class="big"><svg><use href="#rpaste"/></svg>Paste</button>
        <div class="small"><button><svg class="i16"><use href="#rcut"/></svg>Cut</button><button><svg class="i16"><use href="#rpath"/></svg>Copy path</button><button><svg class="i16"><use href="#rps"/></svg>Paste shortcut</button></div>
      </div><span class="cap">Clipboard</span></div>
      <div class="group g2"><div class="tools">
        <button class="big"><svg><use href="#rmove"/></svg>Move<br>to <i class="tri"></i></button>
        <button class="big"><svg><use href="#rcopyto"/></svg>Copy<br>to <i class="tri"></i></button>
        <i class="split"></i>
        <button class="big"><svg><use href="#rdel"/></svg>Delete<br><i class="tri"></i></button>
        <button class="big"><svg><use href="#rren"/></svg>Rename</button>
      </div><span class="cap">Organize</span></div>
      <div class="group g3"><div class="tools">
        <button class="big"><svg><use href="#rnewf"/></svg>New<br>folder</button>
        <div class="small"><button><svg class="i16"><use href="#rnewi"/></svg>New item <i class="tri"></i></button><button><svg class="i16"><use href="#reasy"/></svg>Easy access <i class="tri"></i></button></div>
      </div><span class="cap">New</span></div>
      <div class="group g4"><div class="tools">
        <button class="big wide"><svg><use href="#rprop"/></svg>Properties<br><i class="tri"></i></button>
        <div class="small"><button><svg class="i16" viewBox="0 0 24 24"><use href="#uisq"/><text x="12" y="17" font-size="15">Ui</text></svg>Open <i class="tri"></i></button><button class="off"><svg class="i16"><use href="#redit"/></svg>Edit</button><button><svg class="i16"><use href="#rhist"/></svg>History</button></div>
      </div><span class="cap">Open</span></div>
      <div class="group g5"><div class="tools">
        <div class="small"><button><svg class="i16"><use href="#rall"/></svg>Select all</button><button><svg class="i16"><use href="#rnone"/></svg>Select none</button><button><svg class="i16"><use href="#rinv"/></svg>Invert selection</button></div>
      </div><span class="cap">Select</span></div>
    </div>
    <div class="address">
      <button aria-label="Back"><svg class="i16"><use href="#arr"/></svg></button><button class="dim" aria-label="Forward"><svg class="i16 flip"><use href="#arr"/></svg></button><button class="thin" aria-label="Recent"><svg class="i8 down"><use href="#up"/></svg></button><button class="thin" aria-label="Up"><svg class="i16 turn"><use href="#arr"/></svg></button>
      <div class="path"><svg class="i16"><use href="#folder"/></svg><b></b><a href="#">This PC</a><b></b><a href="#">OSDisk (C:)</a><b></b><a href="#">shailja_uipath</a><b></b><a href="#">ComputerVisionUsingUIPath</a><b></b><a href="#">RoboticEnterpriseFramework</a><b></b><span class="grow"></span><svg class="i12 down"><use href="#up"/></svg><button class="reload" aria-label="Refresh"><svg class="i16"><use href="#rel"/></svg></button></div>
      <label class="find"><svg class="i16"><use href="#mag"/></svg><input type="text" placeholder="Search RoboticEnterpriseFra..." aria-label="Search folder"></label>
    </div>
    <div class="panes">
      <nav class="tree">
        <ul><li class="top"><svg class="i16"><use href="#star"/></svg>Quick access</li>
        <li><svg class="i16"><use href="#doc"/></svg>Documents<svg class="pinned"><use href="#pin"/></svg></li>
        <li><svg class="i16"><use href="#down"/></svg>Downloads<svg class="pinned"><use href="#pin"/></svg></li>
        <li><svg class="i16"><use href="#pic"/></svg>Pictures<svg class="pinned"><use href="#pin"/></svg></li>
        <li><svg class="i16"><use href="#cloud"/></svg>OneDrive - NXP<svg class="pinned"><use href="#pin"/></svg></li>
        <li><svg class="i16"><use href="#folder"/></svg>BARP_SDK</li>
        <li><svg class="i16"><use href="#folder"/><use href="#ok"/></svg>definition</li>
        <li><svg class="i16"><use href="#folder"/></svg>Docs</li>
        <li><svg class="i16"><use href="#folder"/><use href="#ok"/></svg>RoboticEnterpriseFr</li></ul>
        <ul><li class="top"><svg class="i16"><use href="#cloud"/></svg>OneDrive - NXP</li></ul>
        <ul><li class="top"><svg class="i16"><use href="#pc"/></svg>This PC</li>
        <li><svg class="i16"><use href="#cube"/></svg>3D Objects</li>
        <li><svg class="i16"><use href="#desk"/></svg>Desktop</li>
        <li><svg class="i16"><use href="#doc"/></svg>Documents</li>
        <li><svg class="i16"><use href="#down"/></svg>Downloads</li>
        <li><svg class="i16"><use href="#note"/></svg>Music</li>
        <li><svg class="i16"><use href="#pic"/></svg>Pictures</li>
        <li><svg class="i16"><use href="#film"/></svg>Videos</li>
        <li class="sel"><svg class="i16"><use href="#disk"/></svg>OSDisk (C:)</li>
        <li><svg class="i16"><use href="#ndrive"/></svg>nxf38842 (\\wbi.nxp</li>
        <li><svg class="i16"><use href="#ndrive"/></svg>CarBuildShare (\\wi</li>
        <li><svg class="i16"><use href="#ndrive"/></svg>P-Drive-Leuven (\\i</li>
        <li><svg class="i16"><use href="#ndrive"/></svg>Projects (\\ingbtcpi</li></ul>
        <ul><li class="top"><svg class="i16"><use href="#net"/></svg>Network</li></ul>
      </nav>
      <table class="files">
        <thead><tr><th scope="col">Name</th></tr></thead>
        <tbody>
        <tr><td><svg class="i16"><use href="#folder"/></svg>.entities</td></tr>
        <tr><td><svg class="i16 pale"><use href="#folder"/></svg>.local</td></tr>
        <tr><td><svg class="i16"><use href="#folder"/><use href="#ok"/></svg>.screenshots</td></tr>
        <tr><td><svg class="i16"><use href="#folder"/><use href="#ok"/></svg>.settings</td></tr>
        <tr><td><svg class="i16"><use href="#folder"/><use href="#ok"/></svg>.tmh</td></tr>
        <tr><td><svg class="i16"><use href="#folder"/><use href="#ok"/></svg>Data</td></tr>
        <tr><td><svg class="i16"><use href="#folder"/><use href="#ok"/></svg>Documentation</td></tr>
        <tr><td><svg class="i16"><use href="#folder"/><use href="#ok"/></svg>Exceptions_Scr</td></tr>
        <tr><td><svg class="i16"><use href="#folder"/><use href="#ok"/></svg>Framework</td></tr>
        <tr><td><svg class="i16"><use href="#folder"/></svg>PycharmProjec</td></tr>
        <tr><td><svg class="i16"><use href="#folder"/><use href="#ok"/></svg>SpeechToText</td></tr>
        <tr><td><svg class="i16"><use href="#pyfile"/></svg>main.py</td></tr>
        <tr><td><svg class="i16"><use href="#txt"/></svg>main.txt</td></tr>
        <tr class="sel"><td><svg class="i16"><use href="#uifile"/><text x="8" y="11" font-size="9">Ui</text><use href="#ok"/></svg>Main.xaml</td></tr>
        <tr><td><svg class="i16"><use href="#uifile"/><text x="8" y="11" font-size="9">Ui</text><use href="#ok"/></svg>Main_01022021</td></tr>
        <tr><td><svg class="i16"><use href="#uifile"/><text x="8" y="11" font-size="9">Ui</text></svg>Main_opt.xaml</td></tr>
        <tr><td><svg class="i16"><use href="#uifile"/><text x="8" y="11" font-size="9">Ui</text></svg>Main_org.xaml</td></tr>
        <tr><td><svg class="i16"><use href="#uifile"/><text x="8" y="11" font-size="9">Ui</text><use href="#ok"/></svg>Main_test.xaml</td></tr>
        <tr><td><svg class="i16"><use href="#uifile"/><text x="8" y="11" font-size="9">Ui</text></svg>Main180321.xa</td></tr>
        <tr><td><svg class="i16"><use href="#uifile"/><text x="8" y="11" font-size="9">Ui</text><use href="#ok"/></svg>Process.xaml</td></tr>
        <tr><td><svg class="i16"><use href="#json"/><use href="#ok"/></svg>project.json</td></tr>
        <tr><td><svg class="i16"><use href="#txt"/></svg>PyCode.txt</td></tr>
        <tr><td><svg class="i16"><use href="#txt"/></svg>PythonCode.txt</td></tr>
        <tr><td><svg class="i16"><use href="#uifile"/><text x="8" y="11" font-size="9">Ui</text><use href="#ok"/></svg>Sequence.xaml</td></tr>
        </tbody>
      </table>
    </div>
    <footer class="status"><span>24 items</span><i class="bar"></i><span>1 item selected</span><span>85.2 KB</span><i class="bar"></i><span class="grow"></span><button class="view on" aria-label="Details"><svg class="i16"><use href="#vlist"/></svg></button><button class="view" aria-label="Large icons"><svg class="i16"><use href="#pic"/></svg></button></footer>
  </section>

  <section class="vnc">
    <header class="vtitle"><svg class="i16"><use href="#vnc"/></svg><h2>DESKTOP-53M669E (DESKTOP-53M669E) - VNC Viewer</h2><div class="winbtns"><button aria-label="Minimize"><svg class="i16"><use href="#wmin"/></svg></button><button aria-label="Maximize"><svg class="i16"><use href="#wmax"/></svg></button><button aria-label="Close"><svg class="i16"><use href="#wx"/></svg></button></div></header>
    <div class="remote">
      <svg class="wallpaper"><use href="#wall"/></svg>
      <i class="handle"></i>
      <div class="icons vicons">
        <a href="#" class="c1 r1 picked"><svg><use href="#bin"/></svg>Recycle Bin</a>
        <a href="#" class="c2 r1"><svg><use href="#filmora"/><use href="#sc"/></svg>Wondershare<br>Filmora X</a>
        <a href="#" class="c3 r1"><svg><use href="#blank"/><use href="#sc"/></svg>UiPathStud...<br>- Shortcut</a>
        <a href="#" class="c4 r1"><svg><use href="#phone"/></svg>WhatsApp<br>Image 2021...</a>
        <a href="#" class="c1 r2"><svg><use href="#acro"/><use href="#sc"/></svg>Acrobat<br>Reader DC</a>
        <a href="#" class="c1 r3"><svg><use href="#chrome"/><use href="#sc"/></svg>Google<br>Chrome</a>
        <a href="#" class="c3 r3"><svg><use href="#lines"/></svg>output<br>message w...</a>
        <a href="#" class="c1 r4"><svg><use href="#blank"/><use href="#sc"/></svg>UiPath.Stu...<br>- Shortcut</a>
        <a href="#" class="c1 r5"><svg><use href="#edraw"/><use href="#sc"/></svg>Wondershare<br>EdrawMax</a>
        <a href="#" class="c3 r5"><svg><use href="#ledge"/><use href="#sc"/></svg>Microsoft<br>Edge</a>
        <a href="#" class="c1 r6"><svg><use href="#hello"/><text class="typed" x="18" y="38" font-size="12">hello</text></svg>Screenshot<br>2021-01-...</a>
        <a href="#" class="c3 r6"><svg><use href="#pdf"/><text class="ink" x="24" y="41" font-size="8">PDF</text></svg>Contact<br>Informatio...</a>
        <a href="#" class="c1 r7"><svg><use href="#edge"/><use href="#sc"/></svg>Microsoft<br>Edge</a>
        <a href="#" class="c3 r7"><svg><use href="#pdf"/><text class="ink" x="24" y="41" font-size="8">PDF</text></svg>Scan 31 Mar<br>2021 (1) (1)</a>
      </div>
      <div class="vbar">
        <button class="vstart" aria-label="Start"><svg class="i16"><use href="#win"/></svg></button>
        <label class="vfind"><svg class="i16"><use href="#mag"/></svg><input type="text" placeholder="Type here to search" aria-label="Type here to search"></label>
        <div class="apps"><button aria-label="Task View"><svg class="i16"><use href="#tview"/></svg></button><button class="run" aria-label="File Explorer"><svg><use href="#expl"/></svg></button><button class="run" aria-label="VNC"><svg><use href="#vnco"/></svg></button><button class="run" aria-label="Chrome"><svg><use href="#chrome"/></svg></button><button class="run" aria-label="Acrobat"><svg><use href="#acro"/></svg></button></div>
        <span class="grow"></span>
        <div class="vtray"><svg class="i16"><use href="#up"/></svg><svg class="i16"><use href="#meet"/></svg><svg class="i16"><use href="#batt"/></svg><svg class="i16"><use href="#spk"/></svg><svg class="i16 ink-pen"><use href="#pen"/></svg><span class="lang">ENG</span><span class="clock">14:59<br>31-03-2021</span><span class="notes"><svg class="i16"><use href="#msg"/></svg><em>3</em></span></div>
      </div>
    </div>
  </section>

  <div class="taskbar">
    <div class="apps">
      <button aria-label="Start"><svg class="i16"><use href="#win"/></svg></button><button aria-label="Task View"><svg class="i16"><use href="#tview"/></svg></button><button aria-label="Media player"><svg><use href="#clap"/><text class="red" x="12" y="22" font-size="9">321</text></svg></button><button class="run" aria-label="File Explorer"><svg><use href="#expl"/></svg></button><button class="run" aria-label="Notepad++"><svg><use href="#npp"/></svg></button><button aria-label="Internet Explorer"><svg><use href="#ie"/></svg></button><button aria-label="Word"><svg><use href="#word"/><text x="6" y="15" font-size="9">W</text></svg></button><button class="run" aria-label="Teams"><svg><use href="#teams6"/><text x="6" y="15" font-size="9">T</text><text x="18" y="21" font-size="9">6</text></svg></button><button class="run" aria-label="Outlook"><svg><use href="#outl"/><text x="6" y="15" font-size="9">O</text></svg></button><button class="run" aria-label="Browser"><svg><use href="#safar"/></svg></button><button class="run" aria-label="Chrome"><svg><use href="#chrs"/><text x="17" y="21" font-size="9">S</text></svg></button><button class="run" aria-label="Acrobat"><svg><use href="#acro"/></svg></button><button class="run" aria-label="Terminal"><svg><use href="#term"/></svg></button><button class="run" aria-label="Excel"><svg><use href="#excel"/><text x="6" y="15" font-size="9">X</text></svg></button><button class="run" aria-label="PowerPoint"><svg><use href="#pptt"/><text x="6" y="15" font-size="9">P</text></svg></button><button class="run" aria-label="Visual Studio"><svg><use href="#vs"/></svg></button><button class="run" aria-label="Chrome profile"><svg><use href="#chrp"/></svg></button><button class="run" aria-label="Eclipse"><svg><use href="#ecl"/></svg></button><button class="run" aria-label="Settings"><svg><use href="#gear"/></svg></button><button class="run" aria-label="UiPath"><svg><use href="#uisq"/><text x="12" y="17" font-size="14">Ui</text></svg></button><button class="run" aria-label="Recorder"><svg><use href="#camt"/></svg></button><button class="run" aria-label="VNC Viewer"><svg><use href="#vnc"/></svg></button>
    </div>
    <span class="grow"></span>
    <div class="tray"><svg class="i16"><use href="#up"/></svg><svg class="i16"><use href="#mic"/></svg><svg class="i16"><use href="#batt"/></svg><span class="lang">ENG<br>US</span><span class="clock">2:59 PM<br>3/31/2021</span><span class="notes"><svg class="i16"><use href="#msg"/></svg><em>6</em></span></div>
  </div>
</main>

<aside class="right">
  <div class="desktop">
    <svg class="wallpaper"><use href="#wall"/></svg>
    <div class="icons dicons">
      <a href="#" class="c2 r1"><svg><use href="#bigpc"/></svg>This PC</a>
      <a href="#" class="c4 r1"><svg><use href="#runx"/><use href="#sc"/></svg>RUN Xplorer<br>6.0.2</a>
      <a href="#" class="c5 r1"><svg><use href="#edge"/><use href="#sc"/></svg>Microsoft<br>Edge</a>
      <a href="#" class="c6 r1"><svg><use href="#w32"/><use href="#sc"/></svg>Win32DiskI...</a>
      <a href="#" class="c7 r1"><svg><use href="#zip"/></svg>test.zip</a>
      <a href="#" class="c8 r1"><svg><use href="#beyond"/><use href="#sc"/></svg>Beyond<br>Compare 4</a>
      <a href="#" class="c2 r2"><svg><use href="#binfull"/></svg>Recycle Bin</a>
      <a href="#" class="c4 r2"><svg><use href="#runx"/><use href="#sc"/></svg>RUN Xplorer<br>8.0.10</a>
      <a href="#" class="c5 r2"><svg><use href="#github"/><use href="#sc"/></svg>GitHub<br>Desktop</a>
      <a href="#" class="c6 r2"><svg><use href="#blank"/></svg>hdradiodat...</a>
      <a href="#" class="c2 r3"><svg><use href="#bigdrive"/><use href="#sc"/></svg>nxf38842<br>(wbi.nxp.co...</a>
      <a href="#" class="c4 r3"><svg><use href="#qdocs"/></svg>QuickDocs</a>
      <a href="#" class="c5 r3"><svg><use href="#tera"/><text class="blue" x="24" y="26" font-size="24">T</text><use href="#sc"/></svg>Tera Term</a>
      <a href="#" class="c6 r3"><svg><use href="#musics"/><use href="#sc"/></svg>Musicsoft<br>Downloader</a>
      <a href="#" class="c2 r4"><svg><use href="#suml"/><use href="#sc"/></svg>StarUML</a>
      <a href="#" class="c3 r4"><svg><use href="#chrome"/><use href="#sc"/></svg>Google<br>Chrome</a>
      <a href="#" class="c4 r4"><svg><use href="#aoc"/><text class="plum" x="24" y="35" font-size="20">C</text></svg>aocAudioP...</a>
      <a href="#" class="c6 r4"><svg><use href="#sunil"/><use href="#sc"/></svg>Sunil -<br>Chrome</a>
      <a href="#" class="c3 r5"><svg><use href="#obs"/><use href="#sc"/></svg>OBS Studio</a>
      <a href="#" class="c4 r5"><svg><use href="#bigpy"/></svg>test.py</a>
      <a href="#" class="c5 r5"><svg><use href="#hp"/><use href="#sc"/></svg>HP Deskjet<br>3540 series</a>
      <a href="#" class="c6 r5"><svg><use href="#printer"/><use href="#sc"/></svg>Shop for<br>Supplies - ...</a>
      <a href="#" class="c3 r6"><svg><use href="#telev"/><use href="#sc"/></svg>Televzr Light</a>
      <a href="#" class="c4 r6"><svg><use href="#bigpy"/></svg>sp.py</a>
      <a href="#" class="c5 r6"><svg><use href="#pptth"/><text x="37" y="43" font-size="9">P</text></svg>PPT CV<br>New.pptx</a>
      <a href="#" class="c3 r7"><svg><use href="#zoomi"/><use href="#sc"/></svg>Zoom</a>
      <a href="#" class="c5 r7"><svg><use href="#docx"/><text x="13" y="30" font-size="16">W</text></svg>DOC.docx</a>
      <a href="#" class="c10 r7"><svg><use href="#logic"/><use href="#sc"/></svg>Logic 1.2.29</a>
      <a href="#" class="c16 r7"><svg><use href="#pych"/><text x="22" y="23" font-size="14">PC</text><use href="#sc"/></svg>PyCharm<br>Communi...</a>
      <a href="#" class="c3 r8"><svg><use href="#elec"/></svg>Electrical</a>
      <a href="#" class="c4 r8"><svg><use href="#teams"/><text x="12" y="30" font-size="16">T</text><use href="#sc"/></svg>Microsoft<br>Teams</a>
    </div>
    <div class="taskbar">
      <div class="apps">
        <button aria-label="Start"><svg class="i16"><use href="#win"/></svg></button><button aria-label="Task View"><svg class="i16"><use href="#tview"/></svg></button><button aria-label="Media player"><svg><use href="#clap"/><text class="red" x="12" y="22" font-size="9">321</text></svg></button><button class="run" aria-label="File Explorer"><svg><use href="#expl"/></svg></button><button class="run" aria-label="Notepad++"><svg><use href="#npp"/></svg></button><button aria-label="Internet Explorer"><svg><use href="#ie"/></svg></button><button aria-label="Word"><svg><use href="#word"/><text x="6" y="15" font-size="9">W</text></svg></button><button class="run" aria-label="Teams"><svg><use href="#teams6"/><text x="6" y="15" font-size="9">T</text><text x="18" y="21" font-size="9">6</text></svg></button><button class="run" aria-label="Outlook"><svg><use href="#outl"/><text x="6" y="15" font-size="9">O</text></svg></button><button class="run" aria-label="Browser"><svg><use href="#safar"/></svg></button><button class="run" aria-label="Chrome"><svg><use href="#chrs"/><text x="17" y="21" font-size="9">S</text></svg></button><button class="run" aria-label="Acrobat"><svg><use href="#acro"/></svg></button><button class="run" aria-label="Terminal"><svg><use href="#term"/></svg></button><button class="run" aria-label="Excel"><svg><use href="#excel"/><text x="6" y="15" font-size="9">X</text></svg></button><button class="run" aria-label="PowerPoint"><svg><use href="#pptt"/><text x="6" y="15" font-size="9">P</text></svg></button><button class="run" aria-label="Visual Studio"><svg><use href="#vs"/></svg></button><button class="run" aria-label="Chrome profile"><svg><use href="#chrp"/></svg></button><button class="run" aria-label="Eclipse"><svg><use href="#ecl"/></svg></button><button class="run" aria-label="Settings"><svg><use href="#gear"/></svg></button><button class="run" aria-label="UiPath"><svg><use href="#uisq"/><text x="12" y="17" font-size="14">Ui</text></svg></button><button class="run" aria-label="Recorder"><svg><use href="#camt"/></svg></button><button class="run" aria-label="VNC Viewer"><svg><use href="#vnc"/></svg></button>
      </div>
      <span class="grow"></span>
      <span class="clock">2:59 PM<br>3/31/2021</span>
    </div>
  </div>
</aside>
</div>
</body>
</html>
```
FILE: styles.css
```css
* { box-sizing: border-box; }
body { margin: 0; background: #000; color: #111; font: 11px/16px "Noto Sans", "Open Sans", sans-serif; }
button, input { margin: 0; padding: 0; border: 0; background: none; color: inherit; font: inherit; }
h1, h2 { margin: 0; font: inherit; }
a { color: inherit; text-decoration: none; }
ul { margin: 0; padding: 0; list-style: none; }
em { font-style: normal; }
svg { display: block; flex: none; }
text { font-weight: 700; fill: #fff; text-anchor: middle; text-shadow: none; }
text.typed { font-family: "Liberation Mono", monospace; fill: #222; }
text.ink { fill: #333; }
text.red { fill: #d2232a; }
text.plum { fill: #9a3fa0; }
text.blue { fill: #1018d8; font-weight: 400; }
.sprite { position: absolute; }
.i16 { width: 16px; height: 16px; }
.i12 { width: 12px; height: 12px; }
.i8 { width: 8px; height: 8px; }
.down, .flip { transform: rotate(180deg); }
.turn { transform: rotate(90deg); }
.grow { flex: 1; }

.screens { display: grid; grid-template-columns: 1fr 1fr; min-height: 100vh; }
.left { position: relative; display: flex; flex-direction: column; background: #fff; min-width: 0; }
.explorer { flex: 1; display: flex; flex-direction: column; }
.bar { width: 1px; height: 13px; background: #b5b5b5; }

.titlebar { display: flex; align-items: center; gap: 6px; height: 23px; color: #999; }
.titlebar .bar + svg { margin-left: 3px; }
.qdrop { margin: 0 3px 0 4px; border: 3px solid transparent; border-top: 4px solid #222; border-bottom: 0; }
.winbtns { display: flex; margin-left: auto; height: 100%; }
.winbtns button { display: grid; place-items: center; width: 46px; }

.tabs { display: flex; height: 23px; padding-right: 4px; }
.tabs button { width: 58px; text-align: center; }
.tabs .file { width: 56px; background: #0063b1; color: #fff; }
.tabs .home { background: #f5f6f7; border: 1px solid #dadbdc; border-bottom: 0; margin-bottom: -1px; position: relative; }
.tabs .fold { display: grid; place-items: center; width: 24px; color: #888; }
.tabs .help { width: 14px; height: 14px; margin: 4px 0 0 4px; border-radius: 50%; background: #0072c6; color: #fff; font-weight: 700; line-height: 14px; }

.ribbon { display: flex; height: 93px; padding: 2px 0; background: #f5f6f7; border: solid #dadbdc; border-width: 1px 0; }
.group { display: flex; flex-direction: column; justify-content: space-between; border-right: 1px solid #e2e3e4; color: #444; }
.cap { text-align: center; line-height: 14px; color: #5a5a5a; }
.tools { display: flex; }
.g1 { width: 264px; padding-left: 3px; }
.g2 { width: 191px; padding-left: 1px; }
.g3 { width: 144px; }
.g4 { width: 134px; }
.g5 { width: 115px; padding-left: 5px; }
.big { display: block; width: 44px; padding-top: 5px; line-height: 13px; text-align: center; white-space: nowrap; align-self: flex-start; color: #222; }
.big svg { width: 32px; height: 32px; margin: 0 auto 3px; }
.wide { width: 62px; }
.g1 .wide { width: 70px; }
.big.off svg { padding: 4px; opacity: .7; }
.ribbon .off { color: #8a8a8a; }
.tri { display: inline-block; vertical-align: middle; border: 3px solid transparent; border-top: 4px solid #222; border-bottom: 0; }
.split { width: 1px; height: 56px; margin: 5px 2px 0; background: #e2e3e4; }
.small { display: flex; flex-direction: column; padding: 2px 0 0 2px; }
.small button { display: flex; align-items: center; gap: 3px; height: 22px; white-space: nowrap; color: #222; }

.address { display: flex; align-items: center; padding: 5px 12px 5px 6px; color: #555; }
.address > button { display: grid; place-items: center; width: 29px; }
.address > .thin { width: 21px; }
.address > .dim { color: #ccc; }
.path { flex: 1; display: flex; align-items: center; gap: 9px; height: 30px; padding-left: 4px; border: 1px solid #d9d9d9; color: #222; white-space: nowrap; }
.path .i16:first-child { margin-right: -4px; }
.path b { width: 5px; height: 5px; border: solid #666; border-width: 1px 1px 0 0; transform: rotate(45deg); }
.path .down { color: #555; }
.reload { display: grid; place-items: center; width: 33px; height: 28px; border-left: 1px solid #d9d9d9; color: #555; }
.find { display: flex; align-items: center; gap: 9px; width: 202px; height: 30px; margin-left: 12px; padding-left: 13px; border: 1px solid #d9d9d9; }
.find svg { color: #888; }
.find input { flex: 1; min-width: 0; text-overflow: clip; }
::placeholder { color: #666; opacity: 1; }

.panes { flex: 1; display: flex; }
.tree { width: 159px; padding: 18px 2px 0 0; border-right: 1px solid #eee; }
.tree ul { margin-bottom: 8px; }
.tree li { display: flex; align-items: center; gap: 5px; height: 24px; padding-left: 32px; overflow: hidden; white-space: nowrap; }
.tree .top { padding-left: 24px; }
.tree .sel, .files .sel { background: #d9d9d9; }
.pinned { width: 11px; height: 11px; margin: 0 3px 0 auto; }
.files { flex: none; width: 600px; margin-left: 15px; border-collapse: collapse; align-self: flex-start; }
.files th { height: 33px; padding: 0 4px; text-align: left; vertical-align: middle; font-weight: 400; color: #5a6f8f; }
.files td { display: flex; align-items: center; gap: 4px; height: 21px; padding: 0 4px; white-space: nowrap; }
.pale { opacity: .55; }

.status { display: flex; align-items: center; gap: 10px; height: 22px; padding: 0 6px 0 14px; color: #1e395b; }
.status span + span { margin-left: -3px; }
.view { display: grid; place-items: center; width: 18px; height: 22px; }
.view.on { width: 22px; background: #cce8ff; border: 1px solid #26a0da; margin-right: -8px; }

.taskbar { display: flex; align-items: stretch; height: 40px; background: linear-gradient(90deg, #22373f, #20343f 50%, #1a2744); color: #fff; }
.apps { display: flex; }
.apps button { display: grid; place-items: center; width: 49px; height: 40px; }
.apps button svg:not(.i16) { width: 24px; height: 24px; }
.run { background: linear-gradient(#76b9ed, #76b9ed) center bottom / 40px 2px no-repeat; }
.tray { display: flex; align-items: center; gap: 8px; margin-right: 3px; padding-right: 21px; border-right: 1px solid #56626f; }
.lang { text-align: center; line-height: 17px; }
.clock { align-self: center; text-align: center; line-height: 17px; white-space: nowrap; }
.tray .lang { width: 28px; }
.tray .clock { width: 56px; }
.desktop .clock { width: 64px; }
.notes { position: relative; margin-left: 8px; }
.notes em { position: absolute; left: 8px; top: 6px; width: 15px; height: 15px; border: 1px solid #999; border-radius: 50%; background: #333c48; font-size: 10px; line-height: 13px; text-align: center; }

.wallpaper { position: absolute; inset: 0; width: 100%; height: 100%; }
.icons { position: relative; flex: 1; display: grid; justify-content: start; align-content: start; color: #fff; text-shadow: 1px 1px 1px rgba(0, 0, 0, .9), 0 1px 2px rgba(0, 0, 0, .6); }
.icons a { text-align: center; line-height: 15px; white-space: nowrap; }
.icons svg { width: 48px; height: 48px; margin: 0 auto 3px; }
.dicons { grid-template-columns: repeat(auto-fill, 76px); grid-auto-rows: 102px; width: 100%; padding-top: 2px; }
.dicons a { padding-top: 5px; }
.vicons { grid-template-columns: repeat(auto-fill, 75px); grid-auto-rows: 99px; width: 100%; padding-top: 4px; }
.vicons a { padding-top: 4px; }
.picked { align-self: start; height: 70px; margin: 1px 2px; background: rgba(255, 255, 255, .22); box-shadow: inset 0 0 0 1px rgba(255, 255, 255, .35); }
.icons .picked { padding-top: 3px; }
.c1 { grid-column: 1; } .c2 { grid-column: 2; } .c3 { grid-column: 3; } .c4 { grid-column: 4; }
.c5 { grid-column: 5; } .c6 { grid-column: 6; } .c7 { grid-column: 7; } .c8 { grid-column: 8; }
.c10 { grid-column: 10; } .c16 { grid-column: 16; }
.r1 { grid-row: 1; } .r2 { grid-row: 2; } .r3 { grid-row: 3; } .r4 { grid-row: 4; }
.r5 { grid-row: 5; } .r6 { grid-row: 6; } .r7 { grid-row: 7; } .r8 { grid-row: 8; }

.vnc { position: absolute; left: 276px; top: 176px; right: 276px; border: 1px solid #666; background: #fff; box-shadow: 0 5px 24px rgba(0, 0, 0, .35); }
.vtitle { display: flex; align-items: center; gap: 5px; height: 30px; padding-left: 8px; color: #000; }
.remote { position: relative; display: flex; flex-direction: column; aspect-ratio: 1366 / 768; overflow: hidden; }
.remote .wallpaper { top: -15px; }
.handle { position: absolute; left: 550px; top: 0; width: 266px; height: 3px; background: #fff; border-bottom: 1px solid #666; }
.vbar { position: relative; display: flex; height: 40px; background: linear-gradient(90deg, #d3e8f0, #e9ecef 40%, #ededed 60%, #e6ebf3); color: #000; }
.vstart { display: grid; place-items: center; width: 48px; }
.vfind { display: flex; align-items: center; gap: 13px; width: 344px; padding-left: 10px; border: 2px solid #c8c8c8; background: #fff; font-size: 14px; }
.vfind ::placeholder { color: #333; }
.vbar .run { background-image: linear-gradient(#0a78d0, #0a78d0); }
.vtray { display: flex; align-items: center; gap: 8px; padding-right: 26px; }
.ink-pen { margin-left: 4px; }
.vtray .lang { width: 34px; }
.vtray .clock { width: 60px; line-height: 19px; }
.vtray .notes em { background: #ddd; }
.right { background: #000; min-width: 0; }
.desktop { position: relative; display: flex; flex-direction: column; aspect-ratio: 16 / 9; overflow: hidden; }
.desktop .taskbar { position: relative; }
```
